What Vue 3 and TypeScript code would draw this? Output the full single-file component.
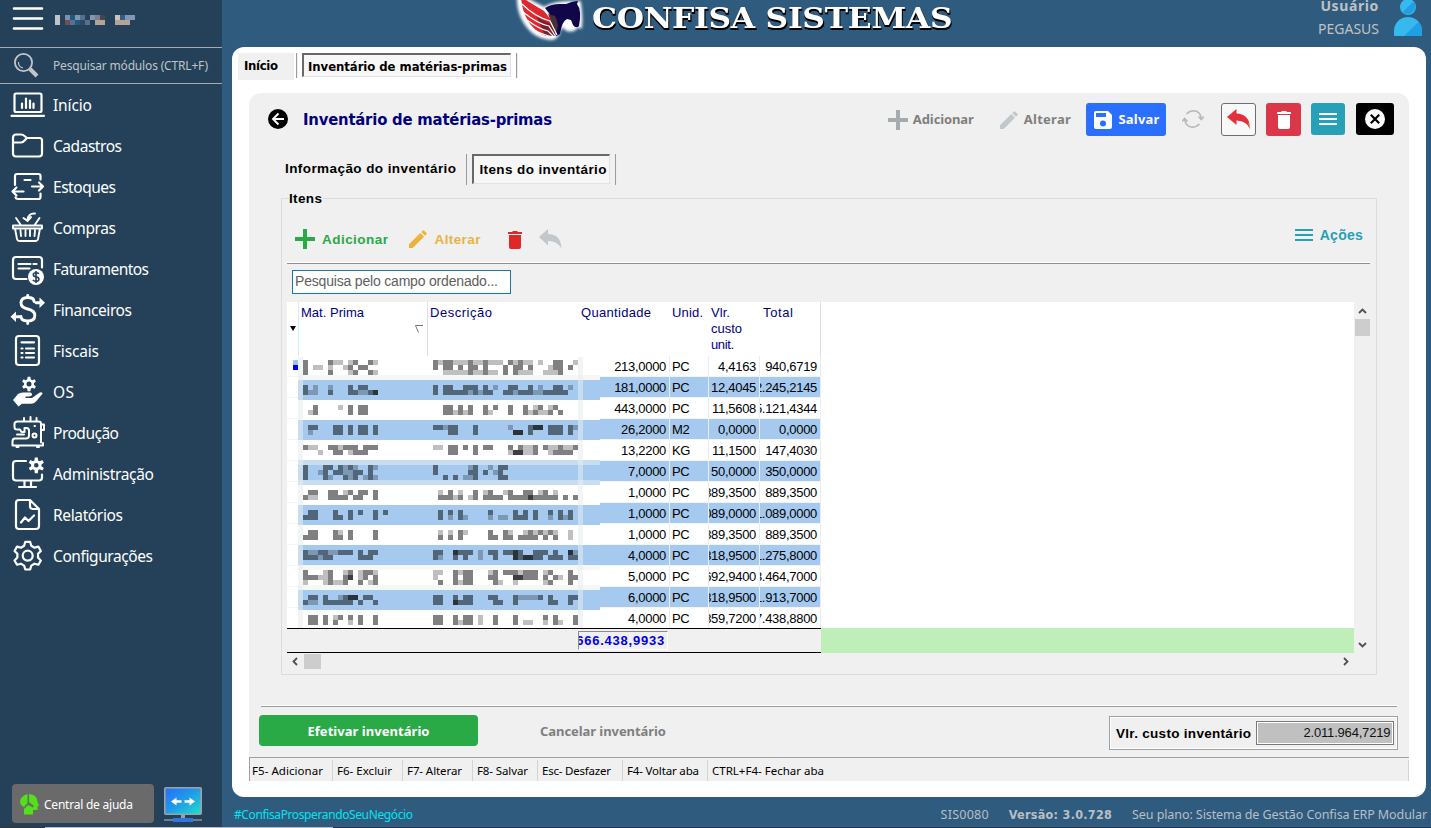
<script setup lang="ts">
import type { Directive } from 'vue'

/* Spreads the letters of a label so that it fills its designed width. */
const vFit: Directive<HTMLElement, number> = {
  mounted(el, binding) {
    const count = (el.textContent ?? '').length
    const natural = el.getBoundingClientRect().width
    if (count > 1) el.style.letterSpacing = `${(binding.value - natural) / (count - 1)}px`
  },
}

/* Gear outline with straight-sided teeth. */
function gear(cx: number, cy: number, outer: number, inner: number, teeth: number, wide = 0.26): string {
  const pts: string[] = []
  const step = (Math.PI * 2) / teeth
  for (let i = 0; i < teeth; i++) {
    const a = i * step - Math.PI / 2
    const put = (r: number, t: number) => pts.push(`${(cx + r * Math.cos(t)).toFixed(2)} ${(cy + r * Math.sin(t)).toFixed(2)}`)
    put(inner, a - step * (wide + 0.08))
    put(outer, a - step * (wide - 0.08))
    put(outer, a + step * (wide - 0.08))
    put(inner, a + step * (wide + 0.08))
  }
  return `M${pts.join('L')}Z`
}

interface MenuItem { label: string; width: number; line?: string; fill?: string; cut?: string; weight?: number }

const menu: MenuItem[] = [
  { label: 'Início', width: 39, line: 'M6 6.5H30Q31.5 6.5 31.5 8V23.5Q31.5 25 30 25H6Q4.500 25 4.500 23.500V8Q4.500 6.500 6 6.500ZM1.500 28.800H34M12 16.500V21M16 11.500V21M20 13.500V21M23.500 16.500V21' },
  { label: 'Cadastros', width: 69, line: 'M3 10Q3 6.500 6 6.500H11Q13 6.500 14.500 8L17 10H29.500Q32 10 32 12.500V25.500Q32 28.500 29 28.500H6Q3 28.500 3 25.500ZM3 14.500H11Q13 14.500 14.500 12.500L17 10' },
  { label: 'Estoques', width: 63, line: 'M5 16V7Q5 5 7 5H28.500Q30.500 5 30.500 7V10.500M14.500 11H20.500M22 17.500H33M29 13.500L33 17.500L29 21.500M13.500 22.500H2.500M6.500 18.500L2.500 22.500L6.500 26.500M5.500 28.500Q6 30 8 30H28.500Q30.500 30 30.500 28V24.500' },
  { label: 'Compras', width: 63, line: 'M3 15.500H32V18.500H3ZM5 18.500L7 29Q7.500 31 9 31H26Q27.500 31 28 29L30 18.500M10.500 20.500L11 26M15.500 20.500V26M20 20.500V26M25 20.500L24.500 26M6 8L10.500 14.500M29.500 8L25 14.500M25 3.500Q18 3 17.500 10M13.500 8L17.500 11L21 7', weight: 1.9 },
  { label: 'Faturamentos', width: 96, line: 'M16.500 28H6Q3 28 3 25V9Q3 6 6 6H29Q32 6 32 9V16.500M8.500 13H20.500M23.500 13H26.500M8.500 17.500H19.500', fill: 'M26 18A8 8 0 1 0 26 34A8 8 0 1 0 26 18Z', cut: 'M29 22.800Q28 21.800 26 21.800Q23.300 21.800 23.300 23.700Q23.300 25.400 26 25.900Q28.900 26.400 28.900 28.200Q28.900 30.200 26 30.200Q23.800 30.200 22.800 29M26 20V32' },
  { label: 'Financeiros', width: 79, line: 'M24 9.500Q24 5.500 17.700 5.500Q11 5.500 11 11Q11 15.500 17.700 17Q24.800 18.500 24.800 23.500Q24.800 29 17.700 29Q11 29 11 24.500M17.700 3.500V5.500M17.700 29V31.500M26 10.700H31M10 24.700H4', fill: 'M29.500 5.500L35 10.700L29.500 16ZM6 19.500L0.500 24.700L6 30Z', weight: 2.9 },
  { label: 'Fiscais', width: 46, line: 'M9 3H26Q29 3 29 6V29Q29 32 26 32H9Q6 32 6 29V6Q6 3 9 3ZM11.500 9.300H24M11.500 15.500H12.500M16 15.500H24M11.500 20H12.500M16 20H24M11.500 24.500H12.500M16 24.500H24' },
  { label: 'OS', width: 21, fill: `${gear(19, 10, 7.3, 5, 6)}M19 7.500A2.500 2.500 0 1 0 19 12.500A2.500 2.500 0 1 0 19 7.500ZM3 26L8 20Q10 18.500 13 18.500H20Q22.500 19 22 21Q21.500 22.300 19 22.500H15.500V24H22L29 19Q31.500 17.500 32.700 19.500L26 27.500Q24 29.700 21 29.700H12L8.500 32.500Z` },
  { label: 'Produção', width: 66, line: 'M4.500 12V9Q4.500 6.500 7.500 6.500H28.500Q31 6.500 31 8.500V27.500M4.500 12Q4.500 14.500 7 14.500H10L11.500 17H14.500V13H16.500Q19 13 19 15.500V20.500Q19 23.500 16 23.500H5Q2.500 23.500 2.500 26.500V30.500H33V28M14 5.500V3M20.500 5.500V2M26.500 5.500V3M31.500 9.500H34V15H31.500M24.500 11H25M24.500 18.500A2 2 0 1 0 24.500 22.500A2 2 0 1 0 24.500 18.500ZM7 19.500H14M6.500 32H8.500M27 32H29', weight: 2 },
  { label: 'Administração', width: 101, line: 'M16 5H6Q3 5 3 8V21.500Q3 24.500 6 24.500H29Q32 24.500 32 21.500V18.500M14.500 25V30M21 25V30M9 31H26', fill: `${gear(26.3, 9.3, 8, 5.2, 6)}M26.300 7A2.300 2.300 0 1 0 26.300 11.600A2.300 2.300 0 1 0 26.300 7Z` },
  { label: 'Relatórios', width: 70, line: 'M9 3H20L29 12V29Q29 32 26 32H9Q6 32 6 29V6Q6 3 9 3ZM20 3V9Q20 12 23 12H29M11 25.500L15 20.500L18.500 24L24 18.500' },
  { label: 'Configurações', width: 100, line: `${gear(17.7, 17.7, 14, 10.5, 6, 0.25)}M17.700 12.700A5 5 0 1 0 17.700 22.700A5 5 0 1 0 17.700 12.700Z` },
]

interface Row { qty: string; unit: string; cost: string; total: string }

const rows: Row[] = [
  { qty: '213,0000', unit: 'PC', cost: '4,4163', total: '940,6719' },
  { qty: '181,0000', unit: 'PC', cost: '12,4045', total: '2.245,2145' },
  { qty: '443,0000', unit: 'PC', cost: '11,5608', total: '5.121,4344' },
  { qty: '26,2000', unit: 'M2', cost: '0,0000', total: '0,0000' },
  { qty: '13,2200', unit: 'KG', cost: '11,1500', total: '147,4030' },
  { qty: '7,0000', unit: 'PC', cost: '50,0000', total: '350,0000' },
  { qty: '1,0000', unit: 'PC', cost: '889,3500', total: '889,3500' },
  { qty: '1,0000', unit: 'PC', cost: '089,0000', total: '1.089,0000' },
  { qty: '1,0000', unit: 'PC', cost: '889,3500', total: '889,3500' },
  { qty: '4,0000', unit: 'PC', cost: '318,9500', total: '1.275,8000' },
  { qty: '5,0000', unit: 'PC', cost: '692,9400', total: '3.464,7000' },
  { qty: '6,0000', unit: 'PC', cost: '318,9500', total: '1.913,7000' },
  { qty: '4,0000', unit: 'PC', cost: '859,7200', total: '7.438,8800' },
]

/* Censored cells: offset from the first row, then mosaic lines for both columns. */
interface Censor { y: number; blue: boolean; code: string[]; text: string[] }

const censored: Censor[] = [
  { y: 5, blue: false, code: ['2....211.12..21', '2.11.1..12.22..', '2....2...12..21'], text: ['21221112112111.21211.1..22..1', '2.22.2.22.2...2.22.2...122.2.', '..11111211211.2.2111..1112...'] },
  { y: 30, blue: true, code: ['2.1..1...2.22..', '211..2...221123'], text: ['2.22..222.2.1..22..2.1..22.1.', '2.2222212122..2212221122222..'] },
  { y: 50, blue: false, code: ['..2....1.2.22..', '.12......2.22..'], text: ['..22.2.2..2.2..2..2.12.12....', '..221212..21...2..212112.2...'] },
  { y: 70, blue: true, code: ['.22...22.2.22.2', '.1....22.2.22.2'], text: ['22122...2......1...233.222.21', '...22...2.......33.2...222.2.'] },
  { y: 90, blue: false, code: ['211..221222.222', '...1..22.1222..'], text: ['11.22.2.2.22...2.2112.2112112', '...22...2......133112..12222.'] },
  { y: 110, blue: true, code: ['2...22.2121..21', '2..12.221122.2.', '2...21..212.121'], text: ['2......12..1.22', '2......22.2.12.', '..2.2.112....22'] },
  { y: 135, blue: false, code: ['.22..22.12.22.2', '211..2222.22..2'], text: ['.1.2.1..2.12..12..22.12.1....', '.22212.12.2222.2222322222.2.2'] },
  { y: 155, blue: true, code: ['.22...2..2.2..2.2', '222...22.2....2..'], text: ['.2.2.2.....2....2.2.2..2.2.2.', '.2.1.21....1.11.222.2..1.212.'] },
  { y: 175, blue: false, code: ['.22...21.2....2', '222...22.2....2'], text: ['.1.1.21....2..21..1212121..1.', '.2.2.2.....22.22.2222.2.2..1.'] },
  { y: 195, blue: true, code: ['2112211222.2.22', '222122.....222.'], text: ['22..3222.1.22.2232..222.2..31', '21..2.2..1..2...323322.222.22'] },
  { y: 215, blue: false, code: ['2...12..12.1221', '222112..23.12.2', '1...12112..2.12'], text: ['11..2122...12.2221222.12...2.', '1...2.22...22...33222.2.21.22', '.2..2122....21..1.....12...2.'] },
  { y: 240, blue: true, code: ['.22.2..1233.22.', '211.222222.2..2'], text: ['22..2.22...22...211112.2...22', '22..3222....22..2......22..2.'] },
  { y: 260, blue: false, code: ['.22.2.12.2.2..2', '.22.2.2..1.2..2'], text: ['22..2.22.1..2...2.....2.2...2', '22..2122.1..2...2.11..1.21..2'] },
]

interface Tile { x: number; y: number; tone: string }

const tiles: Tile[] = censored.flatMap(({ y, blue, code, text }) => {
  const read = (lines: string[], left: number): Tile[] =>
    lines.flatMap((line, r) =>
      [...line].flatMap((c, i) => (c === '.' ? [] : [{ x: left + i * 5, y: y + r * 5, tone: `${blue ? 'b' : 'g'}${c}` }])))
  return [...read(code, 5), ...read(text, 135)]
})

const nameTiles: [number, number, string][] = [
  [0, 0, '#c0c4c8'], [0, 1, '#c0c4c8'], [2, 0, '#7f8fae'], [2, 1, '#6b5258'], [3, 0, '#205a80'], [3, 1, '#5a7088'],
  [4, 0, '#7f98b2'], [4, 1, '#205a80'], [5, 0, '#55708c'], [5, 1, '#2c4a66'], [6, 1, '#5a7088'], [7, 0, '#7f98b2'], [8, 0, '#7a8090'],
  [8, 1, '#b5a396'], [9, 0, '#4a4450'], [9, 1, '#b5a396'], [12, 0, '#c8c4b8'], [12, 1, '#b5a396'], [13, 0, '#3a5a84'],
  [13, 1, '#b5a396'], [14, 0, '#7f98b8'], [14, 1, '#b5a396'], [15, 0, '#7f98b8'],
]

const shortcuts = [
  { label: 'F5- Adicionar', width: 71, cell: 83 },
  { label: 'F6- Excluir', width: 55, cell: 70 },
  { label: 'F7- Alterar', width: 55, cell: 70 },
  { label: 'F8- Salvar', width: 51, cell: 65 },
  { label: 'Esc- Desfazer', width: 69, cell: 85 },
  { label: 'F4- Voltar aba', width: 72, cell: 85 },
  { label: 'CTRL+F4- Fechar aba', width: 112, cell: 701 },
]
</script>

<template>
  <div class="screen">
    <aside class="sidebar">
      <div class="brand">
        <svg class="burger" width="32" height="24" viewBox="0 0 32 24"><path d="M2 1.500H30M2 11.500H30M2 21.500H30" /></svg>
        <svg width="80" height="10" shape-rendering="crispEdges">
          <rect v-for="([x, y, c], i) in nameTiles" :key="i" :x="x * 5" :y="y * 5" width="5" height="5" :fill="c" />
        </svg>
      </div>
      <div class="search">
        <svg width="26" height="26" viewBox="0 0 26 26">
          <circle cx="9.500" cy="9.500" r="8.600" fill="none" stroke="#c3c6c9" stroke-width="1.800" />
          <path d="M4.500 9A5.500 5.500 0 0 0 9 15" fill="none" stroke="#c3c6c9" stroke-width="1.200" />
          <path d="M16 16L23 23" stroke="#c3c6c9" stroke-width="4" />
        </svg>
        <span v-fit="155">Pesquisar módulos (CTRL+F)</span>
      </div>
      <nav class="menu">
        <a v-for="item in menu" :key="item.label" class="entry">
          <svg width="36" height="36" viewBox="0 0 36 36">
            <path v-if="item.line" class="line" :d="item.line" :stroke-width="item.weight ?? 2.2" />
            <path v-if="item.fill" :d="item.fill" fill="#fff" fill-rule="evenodd" />
            <path v-if="item.cut" :d="item.cut" class="cut" />
          </svg>
          <span v-fit="item.width">{{ item.label }}</span>
        </a>
      </nav>
      <div class="tools">
        <button class="help">
          <svg width="19" height="21" viewBox="0 0 19 21">
            <path d="M7.500 0V9L4 13Q0 11 0 7.500Q0.500 2 7.500 0ZM9 0Q17 0.500 17.500 8L19 11.500L17.500 12.500V16H13V20.500H4V15L8 11L13 13.500L14 12L9 8Z" fill="#54df1b" />
          </svg>
          <span v-fit="89">Central de ajuda</span>
        </button>
        <svg class="remote" width="38" height="36" viewBox="0 0 38 36">
          <defs>
            <linearGradient id="glass" x1="0" y1="0" x2="1" y2="1"><stop offset="0" stop-color="#2a6bff" /><stop offset=".5" stop-color="#1f9de8" /><stop offset="1" stop-color="#1fe0cc" /></linearGradient>
          </defs>
          <rect x=".8" y=".8" width="36.400" height="26.400" rx="1" fill="url(#glass)" stroke="#9ba3a8" stroke-width="1.600" />
          <path d="M7 14.500L12.500 10.500V13.200H17.500V15.800H12.500V18.500ZM31 14.500L25.500 10.500V13.200H20.500V15.800H25.500V18.500Z" fill="#fff" />
          <path d="M17 28H21V31H17Z" fill="#9ba3a8" /><path d="M0 33H38" stroke="#6d7f8c" stroke-width="2" /><path d="M9 31H29V35H9Z" fill="#2f77dc" />
        </svg>
      </div>
    </aside>

    <main class="main">
      <header class="topbar">
        <div class="logo">
          <svg width="78" height="47" viewBox="0 0 78 47">
            <defs><filter id="halo" x="-20%" y="-20%" width="140%" height="140%"><feGaussianBlur stdDeviation="1.600" /></filter></defs>
            <path d="M9 -4Q8 18 24 32Q32 38 42 38Q48 36 48 31L52 24L57 29Q64 31 67 25L70 26Q71 16 69 3L58 3Q45 3 34 9Z" fill="#fff" stroke="#fff" stroke-width="4" filter="url(#halo)" />
            <path d="M11 -3L34 11L46 26L45 36L33 35Q13 24 11 -3Z" fill="#e0262e" />
            <path d="M27 17L45 26L45 36L35 36Z" fill="#7b1f2c" />
            <path d="M35 8Q41 4 50 4L56 4Q63 1 68 1L67 4Q72 10 69 26Q66 29 63 25L61 20L57 19Q52 21 50 34L45 37Q48 24 35 8Z" fill="#12064b" />
            <path d="M38 14L45 16Q50 25 46 33Z" fill="#47303c" />
            <path d="M12 4Q25 17 40 21L47 35M13 12Q28 24 39 26L46 37M17 20Q29 29 38 31L44 37M21 28Q32 35 43 37" fill="none" stroke="#fff" stroke-width="1.200" />
          </svg>
          <h1><span v-fit="361">CONFISA SISTEMAS</span></h1>
        </div>
        <div class="user">
          <div class="who"><b><span v-fit="58">Usuário</span></b><span v-fit="61">PEGASUS</span></div>
          <svg width="28" height="38" viewBox="0 0 28 38">
            <circle cx="14" cy="7" r="8" fill="#36b9ec" /><path d="M8.500 12.500L19.700 1.300A8 8 0 0 1 8.500 12.500Z" fill="#219fe4" />
            <path d="M0 35V31A14 14 0 0 1 28 31V35Q28 36 27 36H1Q0 36 0 35Z" fill="#36b9ec" />
            <path d="M10 36L24.500 22Q28 26 28 31V35Q28 36 27 36Z" fill="#219fe4" />
          </svg>
        </div>
      </header>

      <section class="sheet">
        <div class="tabs">
          <div class="home"><span v-fit="34">Início</span></div>
          <i class="bar"></i>
          <div class="pressed"><span v-fit="199">Inventário de matérias-primas</span></div>
          <i class="bar"></i>
        </div>

        <div class="panel">
          <div class="heading">
            <svg width="20" height="20" viewBox="0 0 20 20"><circle cx="10" cy="10" r="10" /><path d="M16 10H5.500M10.500 4.500L5 10L10.500 15.500" fill="none" stroke="#fff" stroke-width="1.900" /></svg>
            <h2><span v-fit="249">Inventário de matérias-primas</span></h2>
            <div class="actions">
              <div class="flat add"><svg width="20" height="20" viewBox="0 0 20 20"><path d="M10 0V20M0 10H20" stroke="#a4acaf" stroke-width="4" /></svg><span v-fit="61">Adicionar</span></div>
              <div class="flat edit"><svg width="18" height="18" viewBox="0 0 18 18"><path d="M0 18V14.300L11.300 3L15 6.700L3.700 18ZM12.300 2L14 .4Q14.500 0 15 .4L17.600 3Q18 3.500 17.600 4L16 5.700Z" fill="#c1c7ca" /></svg><span v-fit="47">Alterar</span></div>
              <button class="btn save"><svg width="18" height="18" viewBox="0 0 18 18"><path fill-rule="evenodd" fill="#fff" d="M2 0H14L18 4V16Q18 18 16 18H2Q0 18 0 16V2Q0 0 2 0ZM2 2V6H12V2ZM9 9.500A3 3 0 1 0 9 15.500A3 3 0 1 0 9 9.500Z" /></svg><span v-fit="41">Salvar</span></button>
              <svg class="reload" width="22" height="18" viewBox="0 0 22 18"><path d="M4.500 4Q7.500 .8 12 .8Q18.500 1.500 19.300 8.500M16.500 6.500L19.300 9.500L22 6.500M17.500 14Q14.500 17.200 10 17.200Q3.500 16.500 2.700 9.500M0 11.500L2.700 8.500L5.500 11.500" fill="none" stroke="#b5bab9" stroke-width="1.600" /></svg>
              <button class="btn undo"><svg width="24" height="22" viewBox="0 0 24 22"><path d="M0 8L9.500 0V4.500Q23 5 23 20Q20 12 9.500 11.500V16Z" fill="#e2303c" /><path d="M21.500 14L23 14.500V21Q22.500 18 21.500 15Z" fill="#e9ae78" /></svg></button>
              <button class="btn trash"><svg width="14" height="18" viewBox="0 0 14 18"><path d="M0 1H4L5 0H9L10 1H14V3H0ZM1 4H13V16Q13 18 11 18H3Q1 18 1 16Z" fill="#fff" /></svg></button>
              <button class="btn list"><svg width="18" height="12" viewBox="0 0 18 12"><path d="M0 1H18M0 6H18M0 11H18" stroke="#fff" stroke-width="2" /></svg></button>
              <button class="btn close"><svg width="20" height="20" viewBox="0 0 20 20"><circle cx="10" cy="10" r="10" fill="#fff" /><path d="M5.800 5.800L14.200 14.200M14.200 5.800L5.800 14.200" stroke="#000" stroke-width="2.200" /></svg></button>
            </div>
          </div>

          <div class="subtabs">
            <span v-fit="171">Informação do inventário</span>
            <i class="bar"></i>
            <div class="pressed"><span v-fit="127">Itens do inventário</span></div>
            <i class="bar"></i>
          </div>

          <div class="group">
            <span class="legend"><span v-fit="33">Itens</span></span>
            <div class="toolbar">
              <svg width="20" height="20" viewBox="0 0 20 20"><path d="M10 0V20M0 10H20" stroke="#2aa947" stroke-width="4" /></svg>
              <span v-fit="66" class="t-add">Adicionar</span>
              <svg class="i-edit" width="18" height="18" viewBox="0 0 18 18"><path d="M0 18V14.300L11.300 3L15 6.700L3.700 18ZM12.300 2L14 .4Q14.500 0 15 .4L17.600 3Q18 3.500 17.600 4L16 5.700Z" fill="#eeb23a" /></svg>
              <span v-fit="46" class="t-edit">Alterar</span>
              <svg class="i-del" width="14" height="18" viewBox="0 0 14 18"><path d="M0 1H4L5 0H9L10 1H14V3H0ZM1 4H13V16Q13 18 11 18H3Q1 18 1 16Z" fill="#e12829" /></svg>
              <svg class="i-back" width="23" height="21" viewBox="0 0 23 21"><path d="M0 8L9 0V5Q22 5 22.500 20Q19 12 9 12V16.500Z" fill="#c1c7ca" /></svg>
              <div class="more"><svg width="18" height="12" viewBox="0 0 18 12"><path d="M0 1H18M0 6H18M0 11H18" stroke="#25a0b7" stroke-width="2" /></svg><span v-fit="43">Ações</span></div>
            </div>
            <div class="query"><span v-fit="203">Pesquisa pelo campo ordenado...</span></div>

            <div class="gridbox">
              <div class="table">
                <div class="cols head">
                  <div class="mark"><svg width="6" height="5"><path d="M0 0H6L3 5Z" /></svg></div>
                  <div class="h code"><span v-fit="63">Mat. Prima</span><svg width="8" height="8" viewBox="0 0 8 8"><path d="M8 .5H.5L3.500 7.500" fill="none" stroke="#777" /></svg></div>
                  <div class="h"><span v-fit="62">Descrição</span></div>
                  <div class="h"><span v-fit="70">Quantidade</span></div>
                  <div class="h"><span v-fit="31">Unid.</span></div>
                  <div class="h"><span v-fit="19">Vlr.</span><span v-fit="31">custo</span><span v-fit="23">unit.</span></div>
                  <div class="h last"><span v-fit="30">Total</span></div>
                </div>
                <div class="body">
                  <div v-for="(row, i) in rows" :key="i" class="cols row" :class="{ odd: i % 2 }">
                    <div class="flag" :class="{ current: i === 0 }"></div>
                    <div class="c"></div>
                    <div class="c"></div>
                    <div class="c num">{{ row.qty }}</div>
                    <div class="c">{{ row.unit }}</div>
                    <div class="c num tight">{{ row.cost }}</div>
                    <div class="c num tight">{{ row.total }}</div>
                  </div>
                  <svg class="mosaic" width="304" height="276" shape-rendering="crispEdges">
                    <rect width="302" height="274" fill="#fff" />
                    <rect v-for="y in [25, 65, 105, 150, 190, 235]" :key="y" :y="y" width="302" :height="y === 105 ? 25 : 20" fill="#a5c9ef" />
                    <path d="M0 105H302V110H0ZM0 125H302V130H0Z" fill="#c9ddf2" />
                    <path d="M0 20H302V25H0ZM0 210H302V215H0ZM0 230H302V235H0Z" fill="#f5f8f7" />
                    <path d="M0 2H5V274H0ZM280 2H285V274H280Z" fill="#e5ecec" fill-opacity=".55" />
                    <rect v-for="(t, i) in tiles" :key="i" :x="t.x" :y="t.y" width="5" height="5" :class="t.tone" />
                  </svg>
                </div>
                <div class="sums">
                  <div class="sum"><span v-fit="88">666.438,9933</span></div>
                </div>
              </div>
              <div class="blank"><div class="void"></div><div class="mint"></div></div>
              <div class="vscroll">
                <svg width="9" height="6" viewBox="0 0 9 6"><path d="M1 5L4.500 1.500L8 5" /></svg>
                <i></i>
                <svg class="end" width="9" height="6" viewBox="0 0 9 6"><path d="M1 1L4.500 4.500L8 1" /></svg>
              </div>
            </div>
            <div class="hscroll">
              <svg width="6" height="9" viewBox="0 0 6 9"><path d="M5 1L1.500 4.500L5 8" /></svg>
              <i></i>
              <svg class="end" width="6" height="9" viewBox="0 0 6 9"><path d="M1 1L4.500 4.500L1 8" /></svg>
            </div>
          </div>

          <div class="closing">
            <button class="confirm"><span v-fit="122">Efetivar inventário</span></button>
            <span v-fit="126" class="cancel">Cancelar inventário</span>
            <div class="cost">
              <span v-fit="135">Vlr. custo inventário</span>
              <div class="amount"><span v-fit="87">2.011.964,7219</span></div>
            </div>
          </div>

          <div class="keys">
            <div v-for="key in shortcuts" :key="key.label" class="key" :style="{ width: `${key.cell}px` }"><span v-fit="key.width">{{ key.label }}</span></div>
          </div>
        </div>
      </section>

      <footer class="status">
        <span v-fit="179" class="tag">#ConfisaProsperandoSeuNegócio</span>
        <span v-fit="48" class="code-id">SIS0080</span>
        <b><span v-fit="103">Versão: 3.0.728</span></b>
        <span v-fit="295">Seu plano: Sistema de Gestão Confisa ERP Modular</span>
      </footer>
    </main>
    <div class="edge"></div>
  </div>
</template>

<style>
html, body { margin: 0; overflow: hidden; }
</style>

<style scoped>
.screen {
  position: relative;
  display: flex;
  width: 1431px;
  height: 828px;
  overflow: hidden;
  background: #2f5b7e;
  font-family: "Noto Sans", "DejaVu Sans Condensed", sans-serif;
  font-size: 13px;
  white-space: nowrap;
}
.screen *, .screen *::before { box-sizing: border-box; }
.screen svg { display: block; flex: none; }
.screen span { display: inline-block; }
button { border: 0; padding: 0; font: inherit; display: flex; align-items: center; justify-content: center; }
h1, h2 { margin: 0; }

/* Sidebar */
.sidebar { width: 222px; flex: none; background: #244159; color: #fff; display: flex; flex-direction: column; }
.brand { height: 48px; border-bottom: 1px solid #a3adb0; display: flex; align-items: flex-start; }
.burger { margin: 7px 11px 0 12px; }
.burger path { stroke: #fff; stroke-width: 2.6; stroke-linecap: round; }
.brand svg + svg { margin-top: 15px; }
.search { height: 36px; border-bottom: 1px solid #a3adb0; display: flex; align-items: center; padding-left: 14px; gap: 13px; font-size: 12px; color: #bfc4c9; }
.menu { display: flex; flex-direction: column; }
.entry { height: 41px; display: flex; align-items: center; gap: 7px; padding-left: 10px; font-size: 15.500px; line-height: 20px; }
.line { fill: none; stroke: #fff; stroke-linecap: round; stroke-linejoin: round; }
.cut { fill: none; stroke: #244159; stroke-width: 1.6; }
.tools { margin-top: auto; height: 44px; display: flex; padding-left: 12px; }
.help { width: 142px; height: 39px; border-radius: 4px; background: #6a6a6a; color: #fff; gap: 5px; justify-content: flex-start; padding: 1px 0 0 8px; font-size: 12px; }
.remote { margin: 3px 0 0 10px; }

/* Top bar */
.main { width: 1209px; display: flex; flex-direction: column; }
.topbar { height: 47px; display: flex; }
.logo { display: flex; margin-left: 288px; }
.logo h1 { margin-left: 4px; font: bold 28px/37px "DejaVu Serif", serif; color: #fff; text-shadow: 1px 2px 0 #000, 0 2px 0 #000; transform: scaleX(1.12); transform-origin: 0 0; height: 37px; }
.user { margin-left: auto; display: flex; gap: 15px; padding-right: 9px; color: #c0c2c4; }
.who { display: flex; flex-direction: column; align-items: flex-end; font-size: 14px; line-height: 18px; }
.who b { line-height: 22px; margin-top: -5px; margin-bottom: 3px; }

/* White sheet */
.sheet { margin-left: 10px; width: 1194px; height: 750px; background: #fff; border-radius: 12px; padding: 6px 0 0 6px; }
.tabs { height: 40px; display: flex; font: bold 13px/24px "DejaVu Sans Condensed", sans-serif; color: #000; }
.home { width: 56px; height: 27px; padding: 1px 0 0 6px; background: #f0f0f0; }
.bar { display: block; width: 2px; height: 25px; flex: none; background: #9b9b9b; border-right: 1px solid #eee; }
.tabs .bar:nth-of-type(1) { margin: 0 4px 0 2px; }
.tabs .bar:nth-of-type(2) { margin-left: 5px; }
.pressed { background: #f7f7f7; border: 1px solid #e3e3e3; border-top: 2px solid #696969; border-left: 2px solid #696969; }
.tabs .pressed { width: 209px; height: 24px; padding-left: 4px; line-height: 23px; }

/* Grey panel */
.panel { margin-left: 11px; width: 1160px; height: 688px; background: #f0f0f0; border-radius: 12px 12px 0 0; display: flex; flex-direction: column; }
.heading { height: 61px; padding: 10px 15px 0 19px; display: flex; }
.heading > svg { margin-top: 6px; }
h2 { margin-left: 15px; font: bold 16.500px/34px "DejaVu Sans Condensed", sans-serif; color: #000080; }
.actions { margin-left: auto; display: flex; align-items: flex-start; }
.flat { height: 33px; display: flex; align-items: center; color: #7f7f7f; font-weight: bold; font-size: 13px; }
.flat span, .save span { margin-top: -2px; }
.add { gap: 5px; }
.edit { margin-left: 26px; gap: 6px; }
.btn { height: 33px; border-radius: 3px; }
.save { width: 80px; margin-left: 15px; padding-left: 2px; gap: 6px; background: #2a6fff; color: #fff; font-weight: bold; font-size: 13px; }
.reload { margin: 7px 17px 0 16px; }
.undo { width: 35px; background: #f7f8f8; border: 1px solid #6e6e72; }
.trash { width: 35px; margin-left: 10px; background: #dc3748; }
.list { width: 34px; height: 32px; margin-left: 10px; background: #26a1b8; }
.close { width: 38px; height: 32px; margin-left: 11px; background: #000; }
.subtabs { height: 31px; padding-left: 36px; display: flex; font: bold 13.500px/29px "Liberation Sans", Arial, sans-serif; }
.subtabs .bar { height: 31px; margin-left: 10px; }
.subtabs .pressed { width: 138px; height: 30px; margin-left: 4px; padding-left: 5px; line-height: 27px; }
.subtabs .pressed + .bar { margin-left: 5px; }

/* Group box */
.group { position: relative; margin: 13px 0 0 32px; width: 1096px; height: 477px; border: 1px solid #dcdcdc; padding-left: 5px; }
.legend { position: absolute; left: 7px; top: -8px; background: #f0f0f0; padding-right: 1px; font: bold 13.500px/16px "Liberation Sans", Arial, sans-serif; }
.toolbar { width: 1083px; height: 65px; border-bottom: 1px solid #8f8f8f; padding: 15px 7px 0 8px; display: flex; align-items: center; font: bold 13.500px "Liberation Sans", Arial, sans-serif; box-shadow: inset 0 -1px 0 #fff; }
.t-add { margin: 2px 0 0 7px; color: #2aa947; }
.i-edit { margin-left: 21px; }
.t-edit { margin: 2px 0 0 7px; color: #eab23f; }
.i-del { margin: 2px 0 0 27px; }
.i-back { margin: 2px 0 0 17px; }
.more { margin-left: auto; margin-top: -8px; display: flex; align-items: center; gap: 7px; font-size: 14px; color: #25a0b7; }
.query { margin: 6px 0 0 5px; width: 219px; height: 24px; border: 1px solid #1777bd; background: #fff; padding-left: 2px; font: 14px/21px "Liberation Sans", Arial, sans-serif; color: #606060; }
.gridbox { margin-top: 8px; display: flex; height: 351px; }
.table { width: 534px; flex: none; background: #fff; font-family: "Liberation Sans", Arial, sans-serif; font-size: 13px; }
.cols { display: grid; grid-template-columns: 11px 130px 151px 91px 39px 51px 61px; }
.head { height: 54px; color: #000080; }
.h { padding: 3px 0 0 2px; line-height: 16px; display: flex; flex-direction: column; align-items: flex-start; }
.code { border-left: 1px solid #cdeef2; border-right: 1px solid #dedede; }
.code svg { margin: 4px 4px 0 auto; }
.h.last { padding-left: 3px; border-right: 1px solid #dedede; }
.mark { padding: 24px 0 0 3px; }
.body { position: relative; height: 272px; overflow: hidden; }
.row { height: 21px; line-height: 21px; border-bottom: 1px solid #f3f4f5; }
.row .c { height: 20px; border-right: 1px solid #ececec; padding-left: 2px; overflow: hidden; letter-spacing: -.3px; }
.odd .c { background: #a5c9ef; }
.row .num { display: flex; justify-content: flex-end; padding-right: 3px; }
.row .num.tight { padding-left: 0; }
.current { background: linear-gradient(#9fc4f4 0 0) 6px 4px / 5px 5px no-repeat, linear-gradient(#0000ee 0 0) 6px 9px / 5px 5px no-repeat; }
.mosaic { position: absolute; left: 11px; top: -1px; }
.g1 { fill: #bfbfbf; } .g2 { fill: #808080; } .g3 { fill: #403c40; }
.b1 { fill: #7d98b5; } .b2 { fill: #52667a; } .b3 { fill: #2a323c; }
.sums { height: 25px; background: #f0f0f0; border-bottom: 1px solid #000; border-top: 1px solid #000; padding-left: 291px; display: flex; }
.sum { margin-top: 2px; width: 90px; height: 19px; border: 1px solid #fff; border-top-color: #8b8b8b; border-left-color: #8b8b8b; overflow: hidden; display: flex; justify-content: flex-end; padding-right: 2px; font-weight: bold; line-height: 18px; color: #0000ee; }
.blank { width: 533px; display: flex; flex-direction: column; }
.void { flex: 1; background: #fff; }
.mint { height: 25px; background: #bfefb9; }
.vscroll { width: 17px; display: flex; flex-direction: column; align-items: center; padding-top: 6px; }
.vscroll path, .hscroll path { fill: none; stroke: #505050; stroke-width: 1.8; }
.vscroll i { width: 15px; height: 17px; margin-top: 5px; background: #cdcdcd; }
.vscroll .end { margin-top: auto; margin-bottom: 5px; }
.hscroll { width: 1067px; height: 17px; display: flex; align-items: center; padding: 0 5px; }
.hscroll i { width: 17px; height: 15px; margin-left: 6px; background: #cdcdcd; }
.hscroll .end { margin-left: auto; }

/* Bottom area of the panel */
.closing { margin: 31px 0 0 12px; width: 1136px; height: 51px; border-top: 1px solid #9b9b9b; box-shadow: 0 -1px 0 #fff; display: flex; align-items: flex-start; }
.confirm { width: 219px; height: 31px; margin: 8px 0 0 -2px; border-radius: 4px; background: #2aa947; color: #fff; font-weight: bold; font-size: 13px; }
.cancel { margin: 9px 0 0 62px; line-height: 31px; color: #7f7f7f; font-weight: bold; font-size: 13px; }
.cost { margin: 9px -1px 0 auto; width: 289px; height: 34px; border: 1px solid #a0a0a0; outline: 1px solid #fff; outline-offset: -2px; display: flex; align-items: center; gap: 5px; padding-left: 6px; font: bold 13.500px "Liberation Sans", Arial, sans-serif; }
.amount { width: 138px; height: 24px; border: 1px solid #7a7a7a; box-shadow: inset 0 0 0 1px #fff; background: #c0c0c0; display: flex; justify-content: flex-end; padding-right: 3px; font: 13px/21px "Liberation Sans", Arial, sans-serif; color: #111; }
.keys { height: 24px; border-top: 1px solid #a0a0a0; border-left: 1px solid #a0a0a0; display: flex; padding-top: 2px; font-size: 11.500px; line-height: 22px; color: #000; }
.key { flex: none; padding-left: 2px; border-right: 1px solid #d4d4d4; }
.key + .key { padding-left: 4px; }

/* Status line */
.status { height: 31px; display: flex; align-items: center; padding: 3px 4px 0 12px; font-size: 12.500px; color: #b9bfc4; }
.tag { color: #00e5ee; font-size: 12px; }
.code-id { margin-left: auto; }
.status b { margin: 0 20px; font-family: "DejaVu Sans Condensed", sans-serif; }
.edge { position: absolute; left: 0; bottom: 0; width: 1431px; height: 1px; background: linear-gradient(90deg, #353535 45px, #b6b9c4 45px 333px, #24354b 333px); }
</style>
